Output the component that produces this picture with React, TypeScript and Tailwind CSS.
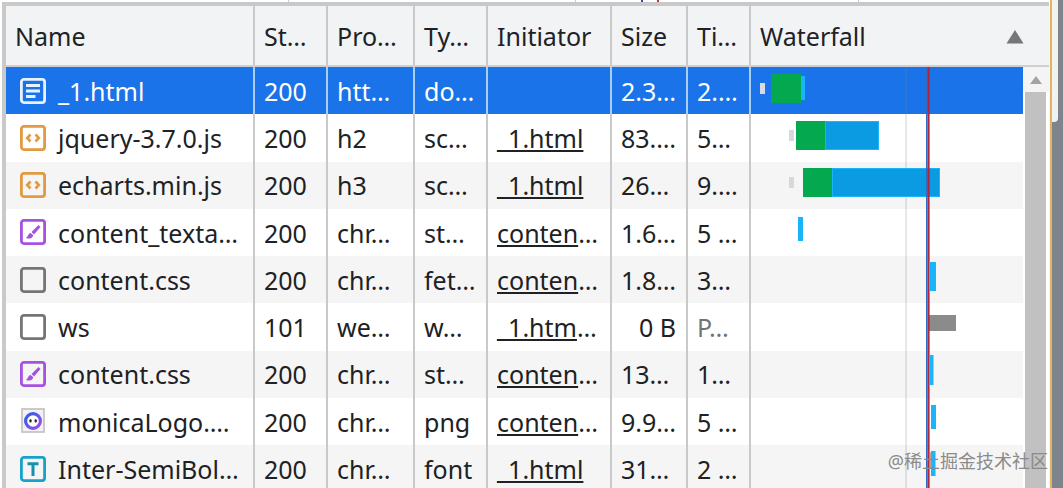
import React from "react";

type IconKind = "doc" | "script" | "style" | "blank" | "image" | "font";

function Icon({ kind }: { kind: IconKind }) {
  if (kind === "doc")
    return (
      <svg width="26" height="26" viewBox="0 0 26 26" fill="none">
        <rect x="1.4" y="1.4" width="23.2" height="23.2" rx="2.5" stroke="#e8f1fd" strokeWidth="2.8" />
        <path d="M6 7.5H20M6 13H20M6 18.5H15.5" stroke="#e8f1fd" strokeWidth="2.8" />
      </svg>
    );
  if (kind === "script")
    return (
      <svg width="26" height="26" viewBox="0 0 26 26" fill="none">
        <rect x="1.4" y="1.4" width="23.2" height="23.2" rx="2.5" stroke="#e3993f" strokeWidth="2.8" />
        <path d="M10.5 9.5L7.2 13L10.5 16.5M15.5 9.5L18.8 13L15.5 16.5" stroke="#e3993f" strokeWidth="2.6" />
      </svg>
    );
  if (kind === "style")
    return (
      <svg width="26" height="26" viewBox="0 0 26 26" fill="none">
        <rect x="1.4" y="1.4" width="23.2" height="23.2" rx="2.5" stroke="#a651e0" strokeWidth="2.8" />
        <path d="M18.5 6L11.5 13L14 15.5L20.5 8Z" fill="#a651e0" />
        <path d="M10.5 14C8 14.5 8.5 17.2 6 19C9.5 20.5 13.5 19 13 16Z" fill="#a651e0" />
      </svg>
    );
  if (kind === "font")
    return (
      <svg width="26" height="26" viewBox="0 0 26 26" fill="none">
        <rect x="1.4" y="1.4" width="23.2" height="23.2" rx="2.5" stroke="#17a2c9" strokeWidth="2.8" />
        <path d="M7.5 7.8H18.5M13 7.8V20" stroke="#1b8fb3" strokeWidth="3" />
      </svg>
    );
  if (kind === "image")
    return (
      <svg width="26" height="26" viewBox="0 0 26 26" fill="none">
        <defs>
          <linearGradient id="mon" x1="0" y1="0" x2="1" y2="1">
            <stop offset="0" stopColor="#2b5ce8" />
            <stop offset="1" stopColor="#a24fe8" />
          </linearGradient>
        </defs>
        <rect x="2" y="1" width="22" height="23" fill="#f2f2f6" stroke="#c6c6c6" strokeWidth="1.8" />
        <circle cx="13" cy="13" r="7.4" fill="#fff" stroke="url(#mon)" strokeWidth="3.2" />
        <rect x="9.4" y="11.2" width="2.2" height="3.4" rx="1" fill="#222" />
        <rect x="14.6" y="11.2" width="2.2" height="3.4" rx="1" fill="#222" />
      </svg>
    );
  return (
    <svg width="26" height="26" viewBox="0 0 26 26" fill="none">
      <rect x="1.4" y="1.4" width="23.2" height="23.2" rx="2.5" stroke="#757575" strokeWidth="2.8" />
    </svg>
  );
}

const headers = ["Name", "St…", "Pro…", "Ty…", "Initiator", "Size", "Ti…", "Waterfall"];

type Row = {
  icon: IconKind;
  name: string;
  status: string;
  proto: string;
  type: string;
  init: string;
  initMore?: string;
  size: string;
  time: string;
};

const rows: Row[] = [
  { icon: "doc", name: "_1.html", status: "200", proto: "htt…", type: "do…", init: "", size: "2.3…", time: "2.…" },
  { icon: "script", name: "jquery-3.7.0.js", status: "200", proto: "h2", type: "sc…", init: "_1.html", size: "83.…", time: "5…" },
  { icon: "script", name: "echarts.min.js", status: "200", proto: "h3", type: "sc…", init: "_1.html", size: "26…", time: "9.…" },
  { icon: "style", name: "content_texta…", status: "200", proto: "chr…", type: "st…", init: "conten", initMore: "…", size: "1.6…", time: "5 …" },
  { icon: "blank", name: "content.css", status: "200", proto: "chr…", type: "fet…", init: "conten", initMore: "…", size: "1.8…", time: "3…" },
  { icon: "blank", name: "ws", status: "101", proto: "we…", type: "w…", init: "_1.htm", initMore: "…", size: "0 B", time: "P…" },
  { icon: "style", name: "content.css", status: "200", proto: "chr…", type: "st…", init: "conten", initMore: "…", size: "13…", time: "1…" },
  { icon: "image", name: "monicaLogo.…", status: "200", proto: "chr…", type: "png", init: "conten", initMore: "…", size: "9.9…", time: "5 …" },
  { icon: "font", name: "Inter-SemiBol…", status: "200", proto: "chr…", type: "font", init: "_1.html", size: "31…", time: "2 …" },
];

const grid = "grid grid-cols-[249px_73px_87px_73px_124px_76px_63px_1fr]";

function Waterfall() {
  const blue = "#0a9be3";
  const edge = "#19b4fa";
  const green = "#04a84e";
  return (
    <svg className="absolute left-[745px] top-0" width="272" height="421" viewBox="751 67 272 421">
      <rect x="905" y="67" width="2" height="421" fill="#7f7f7f" fillOpacity="0.18" />
      <rect x="760" y="83" width="5" height="11" fill="#d9dde3" />
      <rect x="771" y="74" width="30" height="29" fill={green} />
      <rect x="801" y="76" width="4" height="24" fill={edge} />

      <rect x="789" y="130" width="5" height="11" fill="#d8d8d8" />
      <rect x="796" y="121" width="29" height="29" fill={green} />
      <rect x="825.5" y="121.5" width="53" height="28" fill={blue} stroke={edge} />

      <rect x="789" y="177" width="5" height="11" fill="#d8d8d8" />
      <rect x="803" y="168" width="29" height="29" fill={green} />
      <rect x="832.5" y="168.5" width="107" height="28" fill={blue} stroke={edge} />

      <rect x="798" y="217" width="5" height="24" fill={edge} />
      <rect x="930" y="262" width="6" height="29" fill={edge} />
      <rect x="929" y="315" width="27" height="16" fill="#8b8b8b" />
      <rect x="930" y="355" width="3.5" height="30" fill={edge} />
      <rect x="931" y="405" width="5" height="24" fill={edge} />
      <rect x="931" y="451" width="4.5" height="25" fill={edge} />

      <rect x="926" y="67" width="1.6" height="421" fill="#2f6cc4" />
      <rect x="927.6" y="67" width="2" height="421" fill="#b0273c" />
    </svg>
  );
}

export default function App() {
  return (
    <div className="relative flex h-[488px] w-[1063px] overflow-hidden bg-white font-['Noto_Sans',sans-serif] text-[25px] text-[#202124]">
      <div className="flex w-[1050px] flex-col">
        <svg className="block shrink-0" width="1050" height="2" viewBox="0 0 1050 2">
          <rect x="288" width="1" height="2" fill="#cccccc" />
          <rect x="575" width="1" height="2" fill="#cccccc" />
          <rect x="641" width="2" height="2" fill="#3048b0" />
          <rect x="657" width="2" height="2" fill="#d03030" />
          <rect x="858" width="1" height="2" fill="#cccccc" />
        </svg>
        <div className="ml-[2px] h-[4px] w-[1047px] shrink-0 bg-[#c9c9c9]" />
        <div className="flex min-h-0 flex-1">
          <div className="ml-[2px] w-[4px] shrink-0 bg-[#c9c9c9]" />
          <div className="flex w-[1043px] flex-col">
            <div className={`${grid} h-[61px] shrink-0 border-b-2 border-[#cfcfcf] bg-[#f1f3f4]`}>
              {headers.map((h, i) => (
                <div
                  key={h}
                  className={`flex items-center justify-between whitespace-nowrap pl-[9px] pt-[2px] ${
                    i < 7 ? "border-r-2 border-[#c9c9c9]" : "pr-[25px]"
                  }`}
                >
                  <span>{h}</span>
                  {i === 7 && (
                    <svg width="18" height="14" viewBox="0 0 18 14">
                      <path d="M9 0L17.5 13.5H0.5Z" fill="#777777" />
                    </svg>
                  )}
                </div>
              ))}
            </div>
            <div className="flex min-h-0 flex-1">
              <div className="relative w-[1017px]">
                {rows.map((r, i) => {
                  const sel = i === 0;
                  const border = sel ? "border-r-2 border-[#a9cdf5]" : "border-r-2 border-[#c9c9c9]";
                  const bg = sel ? "bg-[#1a73e8] text-white" : i % 2 === 1 ? "bg-white" : "bg-[#f5f5f5]";
                  return (
                    <div key={i} className={`${grid} h-[47.25px] ${bg}`}>
                      <div className={`flex items-center gap-[12px] whitespace-nowrap pl-[14px] ${border}`}>
                        <Icon kind={r.icon} />
                        <span className="pt-[2px]">{r.name}</span>
                      </div>
                      <div className={`flex items-center pl-[9px] pt-[2px] ${border}`}>{r.status}</div>
                      <div className={`flex items-center pl-[9px] pt-[2px] ${border}`}>{r.proto}</div>
                      <div className={`flex items-center pl-[9px] pt-[2px] ${border}`}>{r.type}</div>
                      <div className={`flex items-center whitespace-pre pl-[9px] pt-[2px] ${border}`}>
                        <span className="underline">{r.init}</span>
                        <span>{r.initMore}</span>
                      </div>
                      <div className={`flex items-center whitespace-nowrap pl-[9px] pt-[2px] ${border} ${r.size === "0 B" ? "justify-end pr-[10px]" : ""}`}>{r.size}</div>
                      <div className={`flex items-center whitespace-nowrap pl-[9px] pt-[2px] ${border} ${r.time === "P…" ? "text-[#6f7378]" : ""}`}>{r.time}</div>
                      <div />
                    </div>
                  );
                })}
                <Waterfall />
              </div>
              <div className="flex w-[26px] flex-col bg-white">
                <div className="flex h-[25px] shrink-0 items-center justify-center bg-[#f4f4f4]">
                  <svg width="12" height="8" viewBox="0 0 12 8">
                    <path d="M6 0L12 8H0Z" fill="#a3a3a3" />
                  </svg>
                </div>
                <div className="ml-[2px] w-[21px] flex-1 bg-[#c1c1c1]" />
              </div>
            </div>
          </div>
          <div className="w-px bg-[#f4f4f4]" />
        </div>
      </div>
      <div className="w-[2px] bg-[#dfb65e]" />
      <div className="flex flex-1 bg-[#7e848c]">
        <div className="h-[122px] w-[6px] rounded-br-[4px] bg-[#f2f2f2]" />
      </div>
      <div className="absolute bottom-[16px] right-[15px] font-['Noto_Sans','Noto_Sans_CJK_SC',sans-serif] text-[18px] leading-[22px] text-[#8a8a8a]">
        @稀土掘金技术社区
      </div>
    </div>
  );
}
